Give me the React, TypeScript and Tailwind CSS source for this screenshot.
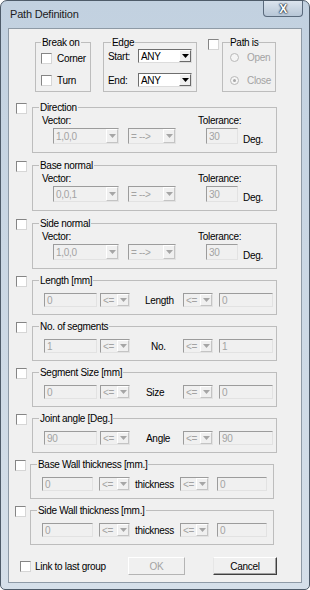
const sunken =
  "border border-t-[#9c9c9c] border-l-[#9c9c9c] border-r-[#e2e2e2] border-b-[#e2e2e2]";

const Check = ({ className = "" }: { className?: string }) => (
  <div
    className={`w-[11px] h-[11px] shrink-0 bg-white border border-t-[#858585] border-l-[#858585] border-r-[#d6d6d6] border-b-[#d6d6d6] ${className}`}
  />
);

const Arrow = ({ on = false }: { on?: boolean }) => (
  <svg width="7" height="4" viewBox="0 0 7 4">
    <polygon points="0,0 7,0 3.5,4" fill={on ? "#000" : "#a6a6a6"} />
  </svg>
);

const Combo = ({
  className,
  text,
  on = false,
}: {
  className: string;
  text: string;
  on?: boolean;
}) => (
  <div
    className={`flex shrink-0 ${className} ${
      on
        ? "bg-white border border-t-[#6e6e6e] border-l-[#6e6e6e] border-r-[#dcdcdc] border-b-[#dcdcdc]"
        : `bg-[#f0f0f0] ${sunken}`
    }`}
  >
    <span
      className={`flex-1 pl-[2px] flex items-center whitespace-nowrap overflow-hidden ${
        on ? "text-black" : "text-[#a3a3a3]"
      }`}
    >
      {text}
    </span>
    <div
      className={`w-[12px] flex items-center justify-center bg-[#f0f0f0] border border-t-white border-l-white ${
        on ? "border-r-[#6a6a6a] border-b-[#6a6a6a]" : "border-r-[#c4c4c4] border-b-[#c4c4c4]"
      }`}
    >
      <Arrow on={on} />
    </div>
  </div>
);

const Field = ({ className, text }: { className: string; text: string }) => (
  <div className={`shrink-0 bg-[#f0f0f0] ${sunken} ${className} pl-[2px] flex items-center text-[#a3a3a3]`}>
    {text}
  </div>
);

const VectorGroup = ({ title, vec }: { title: string; vec: string }) => (
  <div className="flex items-start">
    <Check className="ml-[7px] mt-[2px]" />
    <fieldset className="ml-[5px] w-[245px] h-[52px] border border-[#bdbdbd] pl-[9px]">
      <legend className="ml-[-3px] px-[1px] leading-[13px]">{title}</legend>
      <div className="flex h-[13px] leading-[13px]">
        <span className="w-[156px]">Vector:</span>
        <span>Tolerance:</span>
      </div>
      <div className="flex items-end mt-[1px] pl-[11px]">
        <Combo className="w-[66px] h-[16px]" text={vec} />
        <Combo className="ml-[9px] w-[48px] h-[16px]" text="= -->" />
        <Field className="ml-[30px] w-[32px] h-[16px]" text="30" />
        <span className="ml-[5px] leading-[10px] mb-[-1px]">Deg.</span>
      </div>
    </fieldset>
  </div>
);

type RowProps = {
  title: string;
  label: string;
  value: string;
  labelPad: string;
  wall?: boolean;
};

const RowGroup = ({ title, label, value, labelPad, wall = false }: RowProps) => (
  <div className="flex items-start mt-[5px]">
    <Check className={wall ? "ml-[6px] mt-[2px]" : "ml-[7px] mt-[2px]"} />
    <fieldset
      className={`border border-[#bdbdbd] h-[41px] pl-[11px] ${
        wall ? "ml-[4px] w-[244px]" : "ml-[5px] w-[245px]"
      }`}
    >
      <legend className="ml-[-5px] px-[1px] leading-[13px]">{title}</legend>
      {wall ? (
        <div className="flex items-center mt-[6px] h-[14px]">
          <Field className="w-[51px] h-[14px]" text={value} />
          <Combo className="ml-[6px] w-[31px] h-[14px]" text="<=" />
          <span className={`w-[50px] ${labelPad}`}>{label}</span>
          <Combo className="w-[29px] h-[14px]" text="<=" />
          <Field className="ml-[8px] w-[50px] h-[14px]" text={value} />
        </div>
      ) : (
        <div className="flex items-center mt-[6px] h-[14px]">
          <Field className="w-[53px] h-[14px]" text={value} />
          <Combo className="ml-[3px] w-[30px] h-[14px]" text="<=" />
          <span className={`w-[53px] ${labelPad}`}>{label}</span>
          <Combo className="w-[30px] h-[14px]" text="<=" />
          <Field className="ml-[6px] w-[54px] h-[14px]" text={value} />
        </div>
      )}
    </fieldset>
  </div>
);

const Radio = ({ label, dot = false }: { label: string; dot?: boolean }) => (
  <div className="flex items-center h-[11px] leading-[11px]">
    <div className="w-[9px] h-[9px] rounded-full border border-[#b9b9b9] bg-[#f5f5f5] flex items-center justify-center">
      {dot && <div className="w-[3px] h-[3px] rounded-full bg-[#a8a8a8]" />}
    </div>
    <span className="ml-[8px] text-[#a3a3a3]">{label}</span>
  </div>
);

const App = () => {
  return (
    <div className="w-[310px] h-[590px] font-['Liberation_Sans',Arial,sans-serif] text-[10px] tracking-[-0.3px] text-black">
      <div className="w-[310px] h-[590px] rounded-t-[7px] rounded-b-[5px] border border-[#4e5b69] bg-gradient-to-b from-[#c2d1e0] to-[#d5dfe9] flex flex-col">
        <div className="h-[27px] flex items-start justify-between">
          <div className="h-[27px] flex items-center pl-[9px] text-[11px] tracking-[-0.2px] text-[#1c1c1c]">
            Path Definition
          </div>
          <div className="mr-[6px] w-[40px] h-[16px] rounded-b-[4px] border border-t-0 border-[#5a6a7c] bg-gradient-to-b from-[#dbe4ee] to-[#b7c6d6] flex items-center justify-center text-[12px] font-bold text-white [text-shadow:0_0_1px_#1c2a3a,0_0_2px_#1c2a3a,0_0_2px_#1c2a3a]">
            X
          </div>
        </div>
        <div className="mx-[7px] w-[294px] h-[555px] border border-[#8e9aa6] bg-[#f0f0f0] flex flex-col">
          {/* top row */}
          <div className="flex items-start pt-[7px] pl-[26px]">
            <fieldset className="w-[56px] h-[56px] border border-[#bdbdbd] pl-[5px]">
              <legend className="px-[1px] leading-[13px]">Break on</legend>
              <div className="flex items-center h-[11px] leading-[11px] mt-[4px]">
                <Check />
                <span className="ml-[5px]">Corner</span>
              </div>
              <div className="flex items-center h-[11px] leading-[11px] mt-[11px]">
                <Check />
                <span className="ml-[5px]">Turn</span>
              </div>
            </fieldset>
            <fieldset className="ml-[12px] w-[94px] h-[56px] border border-[#bdbdbd] pl-[4px]">
              <legend className="ml-[3px] px-[1px] leading-[13px]">Edge</legend>
              <div className="flex items-center h-[14px] leading-[11px]">
                <span className="w-[30px]">Start:</span>
                <Combo className="w-[54px] h-[14px]" text="ANY" on />
              </div>
              <div className="flex items-center h-[14px] leading-[11px] mt-[10px]">
                <span className="w-[30px]">End:</span>
                <Combo className="w-[54px] h-[14px]" text="ANY" on />
              </div>
            </fieldset>
            <Check className="ml-[11px] mt-[3px]" />
            <fieldset className="ml-[3px] w-[54px] h-[56px] border border-[#bdbdbd] pl-[7px]">
              <legend className="leading-[13px]">Path is</legend>
              <div className="mt-[3px]">
                <Radio label="Open" />
              </div>
              <div className="mt-[12px]">
                <Radio label="Close" dot />
              </div>
            </fieldset>
          </div>

          {/* criteria */}
          <div className="mt-[9px] flex flex-col">
            <VectorGroup title="Direction" vec="1,0,0" />
            <div className="mt-[6px]">
              <VectorGroup title="Base normal" vec="0,0,1" />
            </div>
            <div className="mt-[6px]">
              <VectorGroup title="Side normal" vec="1,0,0" />
            </div>
            <RowGroup title="Length [mm]" label="Length" value="0" labelPad="pl-[15px]" />
            <RowGroup title="No. of segments" label="No." value="1" labelPad="pl-[21px]" />
            <RowGroup title="Segment Size [mm]" label="Size" value="0" labelPad="pl-[16px]" />
            <RowGroup title="Joint angle [Deg.]" label="Angle" value="90" labelPad="pl-[16px]" />
            <RowGroup title="Base Wall thickness [mm.]" label="thickness" value="0" labelPad="pl-[5px]" wall />
            <RowGroup title="Side Wall thickness [mm.]" label="thickness" value="0" labelPad="pl-[5px]" wall />
          </div>

          {/* bottom */}
          <div className="mt-[12px] flex items-center h-[18px]">
            <Check className="ml-[11px]" />
            <span className="ml-[4px] w-[93px]">Link to last group</span>
            <div className="w-[57px] h-[18px] flex items-center justify-center bg-[#f0f0f0] border border-t-white border-l-white border-r-[#b4b4b4] border-b-[#b4b4b4] text-[#a3a3a3]">
              OK
            </div>
            <div className="ml-[28px] w-[64px] h-[18px] flex items-center justify-center bg-[#f0f0f0] border border-t-white border-l-[#e6e6e6] border-r-[#404040] border-b-[#404040] shadow-[inset_-1px_-1px_0_#a0a0a0]">
              Cancel
            </div>
          </div>
        </div>
      </div>
    </div>
  );
};

export default App;
